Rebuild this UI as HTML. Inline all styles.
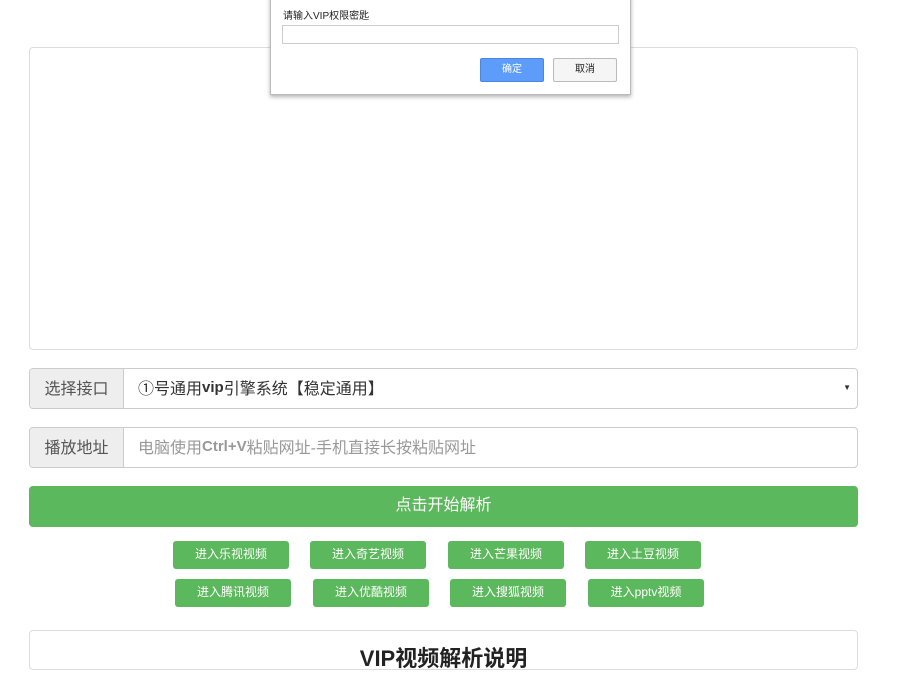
<!DOCTYPE html>
<html><head><meta charset="utf-8"><style>
*{box-sizing:border-box;margin:0;padding:0}
body{width:900px;height:650px;overflow:hidden;background:#fff;position:relative;font-family:"Liberation Sans","Noto Sans CJK SC",sans-serif;color:#333}
.a{position:absolute}
.video{left:29px;top:47px;width:829px;height:303px;border:1px solid #ddd;border-radius:4px}
.grp{left:29px;width:829px;height:41px;border:1px solid #ccc;border-radius:4px;overflow:hidden;display:flex}
.lab{width:94px;background:#eee;border-right:1px solid #ccc;font-size:16px;color:#555;display:flex;align-items:center;justify-content:center;padding-bottom:3px}
.val{flex:1;font-size:16px;display:flex;align-items:center;padding-left:14px;padding-bottom:3px}
.val b{font-size:15px}
.go{left:29px;top:486px;width:829px;height:41px;background:#5cb85c;border-radius:4px;color:#fff;font-size:16px;text-align:center;line-height:39px}
.b{width:116px;height:28px;background:#5cb85c;border-radius:3px;color:#fff;font-size:12px;text-align:center;line-height:26px}
.panel{left:29px;top:630px;width:829px;height:40px;border:1px solid #ddd;border-radius:4px;text-align:center;font-size:22px;font-weight:bold;padding-top:10px;color:#222}
.dlg{left:270px;top:-5px;width:361px;height:100px;background:#fff;border:1px solid #bbb;box-shadow:0 2px 4px rgba(0,0,0,.3)}
</style></head><body>
<div class="a video"></div>
<div class="a grp" style="top:368px"><div class="lab">选择接口</div><div class="val" style="color:#333">①号通用<b>vip</b>引擎系统【稳定通用】<span style="margin-left:auto;margin-right:6px;font-size:8px;color:#333">▼</span></div></div>
<div class="a grp" style="top:427px"><div class="lab">播放地址</div><div class="val" style="color:#999">电脑使用<b>Ctrl+V</b>粘贴网址-手机直接长按粘贴网址</div></div>
<div class="a go">点击开始解析</div>
<div class="a b" style="left:173px;top:541px">进入乐视视频</div>
<div class="a b" style="left:310px;top:541px">进入奇艺视频</div>
<div class="a b" style="left:448px;top:541px">进入芒果视频</div>
<div class="a b" style="left:585px;top:541px">进入土豆视频</div>
<div class="a b" style="left:175px;top:579px">进入腾讯视频</div>
<div class="a b" style="left:313px;top:579px">进入优酷视频</div>
<div class="a b" style="left:450px;top:579px">进入搜狐视频</div>
<div class="a b" style="left:588px;top:579px">进入pptv视频</div>
<div class="a panel">VIP视频解析说明</div>
<div class="a dlg">
<div class="a" style="left:12px;top:11px;font-size:10px;color:#222">请输入VIP权限密匙</div>
<div class="a" style="left:11px;top:29px;width:337px;height:19px;border:1px solid #ccc"></div>
<div class="a" style="left:209px;top:62px;width:64px;height:24px;background:#5d9cf8;border:1px solid #4a86e0;border-radius:2px;color:#fff;font-size:10px;text-align:center;line-height:22px">确定</div>
<div class="a" style="left:282px;top:62px;width:64px;height:24px;background:#f5f5f5;border:1px solid #bbb;border-radius:2px;color:#222;font-size:10px;text-align:center;line-height:22px">取消</div>
</div>
</body></html>
